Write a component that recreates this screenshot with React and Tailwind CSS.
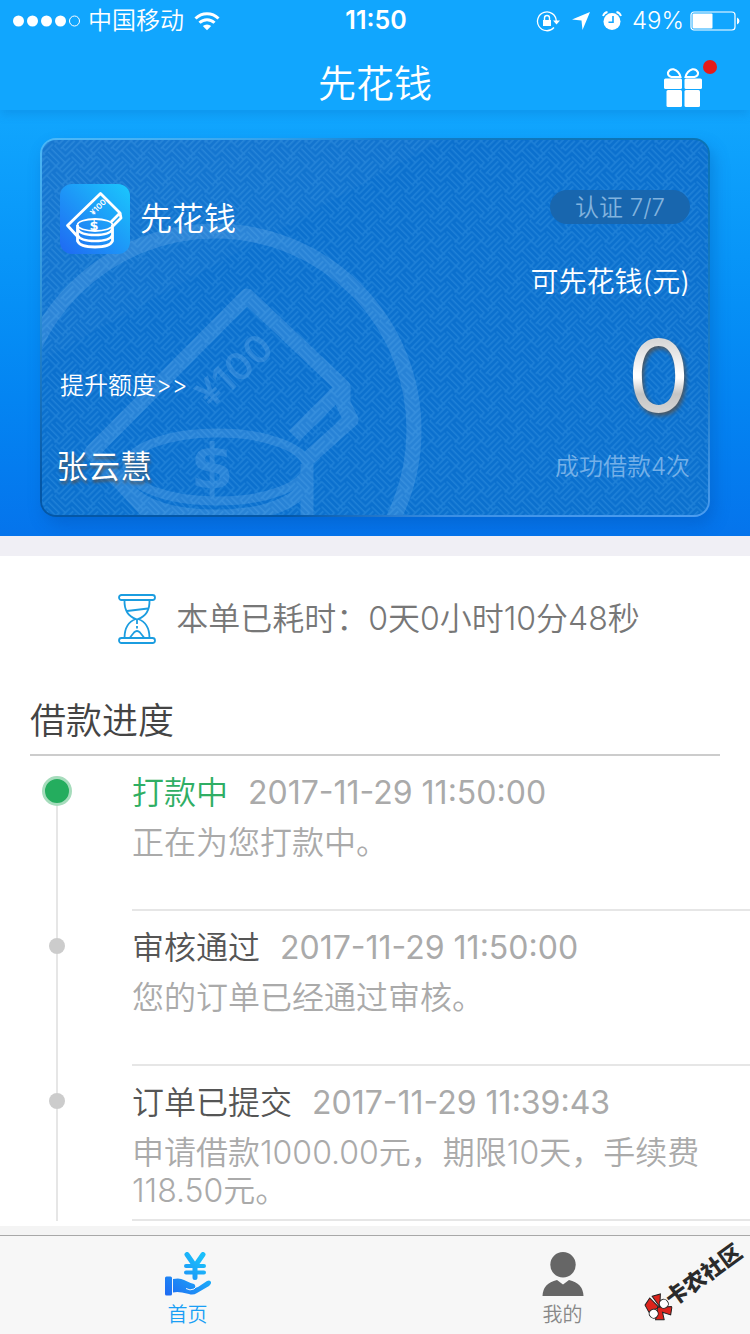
import React from 'react';

const steps = [
  {
    title: '打款中',
    time: '2017-11-29 11:50:00',
    text: '正在为您打款中。',
    active: true,
  },
  {
    title: '审核通过',
    time: '2017-11-29 11:50:00',
    text: '您的订单已经通过审核。',
  },
  {
    title: '订单已提交',
    time: '2017-11-29 11:39:43',
    text: '申请借款1000.00元，期限10天，手续费118.50元。',
  },
];

function StatusBar() {
  return (
    <div className="grid grid-cols-[1fr_auto_1fr] items-center h-10 pt-0.5 pl-3 pr-2.5 text-2xl">
      <div className="flex items-center">
        <svg className="w-[70px] h-3" viewBox="0 0 70 12" fill="white">
          <circle cx="6.500" cy="6" r="5.500" />
          <circle cx="20.500" cy="6" r="5.500" />
          <circle cx="34.500" cy="6" r="5.500" />
          <circle cx="48.500" cy="6" r="5.500" />
          <circle cx="62.500" cy="6" r="5" fill="none" stroke="white" />
        </svg>
        <span className="ml-1.5">中国移动</span>
        <svg className="ml-2.5 w-[26px] h-5" viewBox="0 0 26 20" fill="none" stroke="white">
          <path d="M1.500 7.500a16.300 16.300 0 0 1 23 0" strokeWidth="3" />
          <path d="M5.500 11.800a10.600 10.600 0 0 1 15 0" strokeWidth="3" />
          <path d="M13 19.300l-4.200-4.200a6 6 0 0 1 8.400 0z" fill="white" stroke="none" />
        </svg>
      </div>
      <span className="font-semibold text-[25px]">11:50</span>
      <div className="flex items-center justify-end">
        <svg className="w-6 h-[22px]" viewBox="0 0 24 22" fill="none" stroke="white">
          <path d="M18 17.500a9.400 9.400 0 1 1 2.300-6.500" strokeWidth="1.300" />
          <path d="M17 10.500h7l-3.500 4z" fill="white" stroke="none" />
          <rect x="7" y="10" width="8" height="6" fill="white" stroke="none" />
          <path d="M8.500 10.500V8a2.500 2.500 0 0 1 5 0v2.500" strokeWidth="1.400" />
        </svg>
        <svg className="ml-3 w-[18px] h-[18px]" viewBox="0 0 18 18" fill="white">
          <path d="M18 0L10.500 18L9.500 8.500L0 7.500z" />
        </svg>
        <svg className="ml-3 w-5 h-5" viewBox="0 0 20 20" fill="white">
          <circle cx="10" cy="10.500" r="8.500" />
          <path d="M1 5a6 6 0 0 1 4.500-4M19 5a6 6 0 0 0-4.500-4" fill="none" stroke="white" strokeWidth="1.800" />
          <path d="M11 5v6.300H6.500" fill="none" stroke="#11a6fe" strokeWidth="1.600" />
        </svg>
        <span className="ml-2.5">49%</span>
        <svg className="ml-1.5 w-[50px] h-5" viewBox="0 0 50 20">
          <rect x="1" y="1" width="44" height="18" rx="3" fill="none" stroke="white" strokeWidth="1.200" />
          <rect x="2.500" y="2.500" width="20" height="15" rx="1" fill="white" />
          <path d="M47 6.500q2.500 1 2.500 3.500t-2.500 3.500z" fill="white" />
        </svg>
      </div>
    </div>
  );
}

function TitleBar() {
  return (
    <div className="grid grid-cols-[1fr_auto_1fr] items-center h-[70px] px-8">
      <span />
      <h1 className="pt-4 text-[38px] leading-[50px]">先花钱</h1>
      <button type="button" aria-label="礼物" className="relative justify-self-end mr-4 mt-6">
        <svg className="w-[38px] h-[39px]" viewBox="0 0 38 39" fill="white">
          <rect x="0" y="10.500" width="18" height="10.500" rx="1.500" />
          <rect x="20.500" y="10.500" width="17.500" height="10.500" rx="1.500" />
          <rect x="2.500" y="22" width="15.500" height="17" rx="1.500" />
          <rect x="20.500" y="22" width="15.500" height="17" rx="1.500" />
          <g fill="none" stroke="white" strokeWidth="2">
            <path d="M16.500 9H7.500Q3.500 8 4 4.500Q5.500.8 9.500 1.300Q15 3 16.500 9z" />
            <path d="M21.500 9h9Q34.500 8 34 4.500Q32.500.8 28.500 1.300Q23 3 21.500 9z" />
          </g>
        </svg>
        <span className="absolute -right-[15px] -top-2 w-3.5 h-3.5 rounded-full bg-[#e41b1b]" />
      </button>
    </div>
  );
}

function CardBackground() {
  return (
    <svg className="absolute inset-0 w-full h-full" aria-hidden="true">
      <defs>
        <pattern
          id="weave"
          width="8"
          height="8"
          patternUnits="userSpaceOnUse"
          patternTransform="translate(14 4) rotate(45) scale(4.420)"
        >
          <path
            d="M0 .5H3.500V-.5M0 1.500H4.500V3.500M-.5 2.500H3.500V4.500M.5 3.500H4.500
               M5.500 0V3.500H4.500M6.500-.5V3.500H8M7.500 .5V4.500H8M4.500 0V1.500M0 .5V-.5M0 4.500H.5V3.500
               M4.500 4.500H7.500V5.500M4 5.500H8.500M3.500 6.500H7.500V8M4.500 7.500H8
               M.5 4.500V7.500H0M1.500 4V8.500M2.500 4.500V7.500H1.500M3.500 4.500V8"
            fill="none"
            stroke="#3f9be6"
            strokeOpacity=".4"
            strokeWidth=".38"
          />
        </pattern>
        <linearGradient id="sheen" x1="0" y1="0" x2="1" y2="1">
          <stop offset="0" stopColor="white" stopOpacity=".05" />
          <stop offset=".5" stopColor="white" stopOpacity=".02" />
        </linearGradient>
      </defs>
      <rect width="100%" height="100%" fill="url(#weave)" />
      <path d="M0 0H400L0 220z" fill="url(#sheen)" />
      <g stroke="#8cc4f5" fill="none" opacity=".22" strokeLinejoin="round">
        <circle cx="173" cy="290" r="199" strokeWidth="15" />
        <path d="M118 385L50 312L205 156L301 247L252 296" strokeWidth="15" />
        <path d="M301 247V263L309 280L262 322" strokeWidth="15" />
        <ellipse cx="175" cy="327" rx="90" ry="34" strokeWidth="9" />
        <path d="M85 330V348Q110 376 175 376T265 346V385V324" strokeWidth="13" />
        <g fill="#8cc4f5" stroke="none" textAnchor="middle">
          <text x="170" y="348" fontSize="62" fontWeight="700" fontFamily="DejaVu Sans">$</text>
          <text x="192" y="244" fontSize="38" fontWeight="600" transform="rotate(-42 192 230)">¥100</text>
        </g>
      </g>
    </svg>
  );
}

function AppLogo() {
  return (
    <svg className="w-[70px] h-[70px]" viewBox="0 0 70 70">
      <defs>
        <linearGradient id="logo" x1="0" y1="1" x2="1" y2="0">
          <stop offset="0" stopColor="#1f68f2" />
          <stop offset="1" stopColor="#1bc8fd" />
        </linearGradient>
      </defs>
      <rect width="70" height="70" rx="12" fill="url(#logo)" />
      <g fill="none" stroke="white" strokeWidth="2.800" strokeLinejoin="round">
        <path d="M18 53L7.500 41.500L40.500 9.500L60 29L51 38" />
        <path d="M60 29L61 34L53 42" />
        <ellipse cx="35" cy="41" rx="17.500" ry="6" strokeWidth="1.800" />
        <path d="M17.500 41V57Q20 63 35 63T52.500 57V41" />
        <path d="M17.500 45Q20 51 35 51T52.500 45M17.500 51Q20 57 35 57T52.500 51" strokeWidth="2.400" />
      </g>
      <g fill="white" textAnchor="middle">
        <text x="34" y="46" fontSize="13" fontWeight="700" fontFamily="DejaVu Sans">$</text>
        <text x="38" y="26" fontSize="8" fontWeight="600" transform="rotate(-45 38 23)">¥100</text>
      </g>
    </svg>
  );
}

function CreditCard() {
  return (
    <section className="bg-linear-to-b from-[#11a6fe] to-[#0574ec] px-10 pt-7 pb-[19px]">
      <div className="rounded-2xl p-0.5 bg-[conic-gradient(#1580d0,#0b73b3_60deg,#1f7cc8_100deg,#4c9df0_120deg,#3a8ee4_160deg,#0457a6_205deg,#0457a6_245deg,#2f92d8_275deg,#4cb8f8_300deg,#35a2ec_330deg,#1580d0)] shadow-[4px_8px_16px_rgba(0,70,160,0.3)]">
        <div className="relative overflow-hidden rounded-[14px] bg-[#0b70ce]">
          <CardBackground />
          <div className="relative px-[18px] pt-11 pb-6">
            <div className="flex justify-between">
              <div className="flex items-center">
                <AppLogo />
                <h2 className="ml-2.5 text-[32px]">先花钱</h2>
              </div>
              <p className="mt-1.5 w-[140px] h-[34px] rounded-full bg-[#1866ae] text-center text-2xl leading-9 text-[#82b3de]">
                认证 7/7
              </p>
            </div>
            <p className="mt-2 text-right text-[28px] leading-10">可先花钱(元)</p>
            <div className="flex items-end justify-between h-[100px] mt-6">
              <a href="#raise" className="mb-6 text-2xl">
                提升额度&gt;&gt;
              </a>
              <span className="text-[100px] leading-[100px] font-normal text-transparent bg-clip-text bg-[linear-gradient(#d8d8d8_15%,#ffffff_48%,#ffffff_52%,#c4c4c4_68%,#d8d8d8_90%)] drop-shadow-[2px_3px_2px_rgba(90,80,70,0.8)]">
                0
              </span>
            </div>
            <div className="flex items-center justify-between mt-[17px] h-12">
              <span className="-ml-1 text-[32px] text-white [text-shadow:1px_3px_3px_rgba(90,80,70,0.8)]">张云慧</span>
              <span className="text-2xl text-[#75b0e8]">成功借款4次</span>
            </div>
          </div>
        </div>
      </div>
    </section>
  );
}

function Hourglass() {
  return (
    <svg className="w-[38px] h-[50px]" viewBox="0 0 38 50" fill="none" stroke="#1b9de0" strokeWidth="1.800">
      <rect x="1" y="1" width="36" height="5" rx="2.500" />
      <rect x="1" y="44" width="36" height="5" rx="2.500" />
      <path d="M6.500 6Q6 21 18 25Q6.500 29 6.500 44M31.500 6Q32 21 20 25Q31.500 29 31.500 44" />
      <path d="M9 17L30 14.500M19 25v5M19 32v2.500" />
      <path d="M12 43.500L16 38.500Q19 35.500 22 38.500L26 43.500" />
    </svg>
  );
}

function Step({ step }) {
  return (
    <li className="flex min-h-[155px]">
      <div className="flex flex-col items-center w-[30px] ml-[42px] mr-[60px]">
        {step.active ? (
          <span className="mt-5 w-[30px] h-[30px] rounded-full border-[3px] border-[#a6dcbc] bg-[#24ad5e]" />
        ) : (
          <>
            <span className="w-0.5 h-[27px] bg-[#e6e6e6]" />
            <span className="w-4 h-4 rounded-full bg-[#cccccc]" />
          </>
        )}
        <span className="flex-1 w-0.5 bg-[#e6e6e6]" />
      </div>
      <div className="flex-1 pt-4 pb-2 border-b-2 border-[#e6e6e6] text-[32px] text-[#aaaaaa]">
        <div className="flex items-center h-[42px]">
          <h3 className={step.active ? 'text-[#2fae64]' : 'text-[#555555]'}>{step.title}</h3>
          <time className="ml-5 font-normal">{step.time}</time>
        </div>
        <p className="mt-2.5 pr-10 leading-[38px]">{step.text}</p>
      </div>
    </li>
  );
}

function Progress() {
  return (
    <section className="pb-[5px] bg-white">
      <p className="flex items-center justify-center h-[126px] pl-2 text-[32px] text-[#777777]">
        <Hourglass />
        <span className="ml-5">本单已耗时：0天0小时10分48秒</span>
      </p>
      <h2 className="mx-[30px] h-[74px] border-b-2 border-[#cccccc] text-4xl leading-[78px] text-[#444444]">
        借款进度
      </h2>
      <ol>
        {steps.map((step) => (
          <Step key={step.title} step={step} />
        ))}
      </ol>
    </section>
  );
}

function TabBar() {
  return (
    <nav className="relative flex h-[99px] border-t border-[#a8a8a8] bg-[#f7f7f7] text-xl">
      <a href="#home" className="flex-1 flex flex-col items-center pt-4 text-[#1a9ff5]">
        <svg className="w-[46px] h-11" viewBox="0 0 46 44">
          <defs>
            <linearGradient id="tab" gradientUnits="userSpaceOnUse" x1="0" y1="44" x2="34" y2="4">
              <stop offset="0" stopColor="#1f68f2" />
              <stop offset="1" stopColor="#1bbffb" />
            </linearGradient>
          </defs>
          <g stroke="url(#tab)" strokeLinecap="round" fill="none">
            <path d="M22 2.500L30 14L38 2.500M30 14V25.500" strokeWidth="5" />
            <path d="M21 14H39M21 20.500H39" strokeWidth="4" />
          </g>
          <rect y="24.500" width="7" height="19" rx="1.500" fill="url(#tab)" />
          <path
            d="M8 27Q15 25.500 19 28Q25 31 29 32Q31 33.500 30 36L33 35L42 29Q45 27.500 46 30Q46.500 32 44 34L32 41Q28 43.500 24 42L17 40.500Q12 39.500 8 40.500z"
            fill="url(#tab)"
          />
          <path d="M21 36.500Q25 39 29 37L31 35" fill="none" stroke="#f7f7f7" strokeWidth="1" />
        </svg>
        <span className="mt-1 leading-[30px]">首页</span>
      </a>
      <a href="#mine" className="flex-1 flex flex-col items-center pt-4 text-[#888888]">
        <svg className="w-[42px] h-11" viewBox="0 0 42 44" fill="#666666">
          <circle cx="21" cy="12.700" r="12.700" />
          <path d="M.5 44Q1 31 15 28L21 32.500L27 28Q41 31 41.500 44z" />
        </svg>
        <span className="mt-1 leading-[30px]">我的</span>
      </a>
      <div className="absolute right-0 bottom-9 flex items-center -rotate-[36deg] text-[#2b2b2b]">
        <svg className="w-6 h-7" viewBox="0 0 24 28" stroke="#222222">
          <path d="M3 4L11 1L13 14L2 12z" fill="#dd241c" />
          <path d="M14 1L22 4L14 14z" fill="#dd241c" />
          <path d="M12 13L3 22L10 27L13 20L18 27L24 21z" fill="#dd241c" />
          <circle cx="19" cy="14" r="4.500" fill="white" />
          <circle cx="5" cy="16" r="4.500" fill="white" />
        </svg>
        <span className="text-[22px] font-black">卡农社区</span>
      </div>
    </nav>
  );
}

export default function App() {
  return (
    <div className="flex flex-col min-h-screen bg-[#f4f4f4] font-[350] font-['Inter','Noto_Sans_CJK_SC',sans-serif]">
      <div className="text-white">
        <header className="relative bg-[#11a6fe] shadow-[0_4px_10px_rgba(0,80,160,0.2)]">
          <StatusBar />
          <TitleBar />
        </header>
        <CreditCard />
      </div>
      <div className="h-5 bg-[#f0eff5]" />
      <Progress />
      <div className="flex-1" />
      <TabBar />
    </div>
  );
}
